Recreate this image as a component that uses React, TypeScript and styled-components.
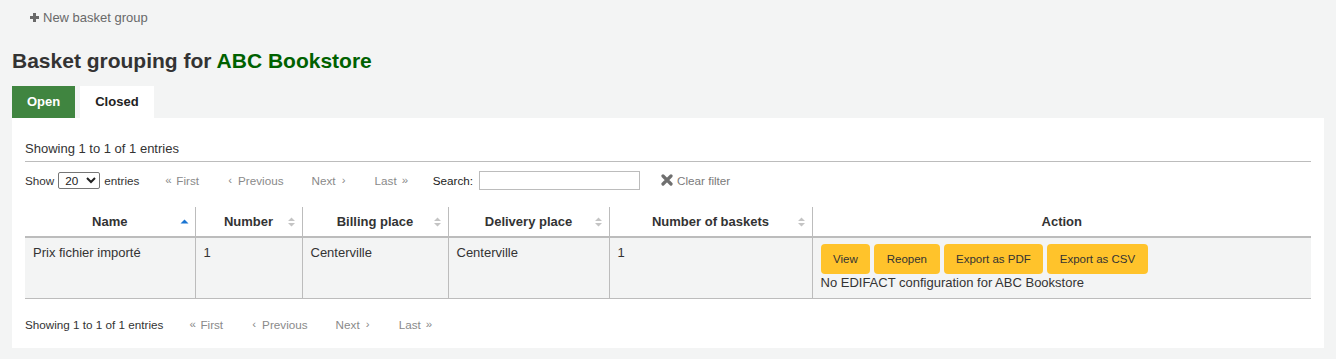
import React from "react";
import styled, { createGlobalStyle } from "styled-components";

const GlobalStyle = createGlobalStyle`
  body {
    margin: 0;
    background: #f3f4f4;
    font-family: "Liberation Sans", Arial, sans-serif;
    font-size: 13px;
    color: #333;
  }
`;

const Page = styled.div`
  padding: 0 12px;
`;

const Toolbar = styled.div`
  display: flex;
  align-items: center;
  height: 35px;
  padding-left: 17px;
`;

const ToolbarButton = styled.span`
  display: inline-flex;
  align-items: center;
  gap: 3px;
  color: #696969;
  font-size: 13px;
`;

const Title = styled.h1`
  margin: 14px 0 0;
  font-size: 21px;
  line-height: 24px;
  font-weight: bold;
  color: #333;
`;

const Vendor = styled.span`
  color: #006100;
`;

const Tabs = styled.div`
  display: flex;
  gap: 5px;
  margin-top: 13px;
`;

const Tab = styled.div<{ $active?: boolean }>`
  height: 32px;
  line-height: 32px;
  padding: 0 15px;
  font-weight: bold;
  font-size: 13px;
  background: ${({ $active }) => ($active ? "#408540" : "#fff")};
  color: ${({ $active }) => ($active ? "#fff" : "#222")};
`;

const Panel = styled.div`
  background: #fff;
  padding: 22px 13px 9px;
`;

const Info = styled.div<{ $small?: boolean }>`
  font-size: ${({ $small }) => ($small ? "11.7px" : "13px")};
  line-height: 17px;
  color: #333;
`;

const InfoBar = styled.div`
  padding-bottom: 4px;
  border-bottom: 1px solid #bcbcbc;
`;

const Controls = styled.div`
  display: flex;
  align-items: center;
  height: 36px;
  margin-bottom: 9px;
`;

const Length = styled.label`
  display: flex;
  align-items: center;
  gap: 4px;
  font-size: 11.7px;
  color: #333;
`;

const Select = styled.select`
  font-family: "Liberation Sans", Arial, sans-serif;
  font-size: 11.7px;
  height: 17px;
  width: 42px;
  padding: 0 2px;
  border: 1px solid #767676;
  border-radius: 2px;
  background: #fff;
  color: #222;
`;

const Pager = styled.div<{ $left: number }>`
  display: flex;
  align-items: center;
  gap: 28px;
  margin-left: ${({ $left }) => $left}px;
  font-size: 11.7px;
  color: #8a8a8a;
`;

const PageLink = styled.span`
  display: inline-flex;
  align-items: center;
  gap: 5px;
`;

const Arrow = styled.span`
  display: inline-block;
  width: 6px;
  text-align: center;
  font-size: 11.5px;
`;

const Search = styled.label`
  display: flex;
  align-items: center;
  gap: 6px;
  margin-left: 25px;
  font-size: 11.7px;
  color: #222;
`;

const SearchInput = styled.input`
  width: 161px;
  height: 19px;
  box-sizing: border-box;
  border: 1px solid #bcbcbc;
  padding: 0 4px;
`;

const ClearFilter = styled.span`
  display: inline-flex;
  align-items: center;
  gap: 4px;
  margin-left: 21px;
  font-size: 11.7px;
  color: #7a7a7a;
`;

const Table = styled.table`
  width: 100%;
  table-layout: fixed;
  border-collapse: collapse;
  font-size: 13px;
`;

const Col = styled.col<{ $width?: number }>`
  width: ${({ $width }) => ($width ? `${$width}px` : "auto")};
`;

const Th = styled.th`
  position: relative;
  height: 29px;
  padding: 0 18px;
  font-weight: bold;
  text-align: center;
  color: #333;
  border-left: 1px solid #bcbcbc;
  border-bottom: 2px solid #bcbcbc;
  &:first-child {
    border-left: none;
  }
`;

const SortIcon = styled.span`
  position: absolute;
  right: 6px;
  top: 50%;
  transform: translateY(-50%);
  display: flex;
`;

const Row = styled.tr`
  background: #f3f4f4;
`;

const Td = styled.td`
  vertical-align: top;
  padding: 6px 8px 7px;
  line-height: 17px;
  color: #333;
  border-left: 1px solid #bcbcbc;
  border-bottom: 1px solid #bcbcbc;
  &:first-child {
    border-left: none;
  }
`;

const Actions = styled.div`
  display: flex;
  gap: 4px;
`;

const ActionButton = styled.button`
  height: 30px;
  padding: 0 12.5px;
  font-family: "Liberation Sans", Arial, sans-serif;
  font-size: 11.5px;
  color: #333;
  background: #ffc32b;
  border: none;
  border-radius: 4px;
`;

const Footer = styled.div`
  display: flex;
  align-items: center;
  height: 30px;
  margin-top: 10px;
`;

const PlusIcon = () => (
  <svg width="11" height="11" viewBox="0 0 11 11">
    <path d="M5.5 1v9M1 5.5h9" stroke="#696969" strokeWidth="3" />
  </svg>
);

const XIcon = () => (
  <svg width="12" height="12" viewBox="0 0 12 12">
    <path
      d="M2 2l8 8M10 2l-8 8"
      stroke="#6f6f6f"
      strokeWidth="3.2"
      strokeLinecap="round"
    />
  </svg>
);

const Sort = ({ active }: { active?: boolean }) =>
  active ? (
    <svg width="9" height="12" viewBox="0 0 9 12">
      <path d="M0.5 7.5L4.5 3.5L8.5 7.5Z" fill="#1a75d2" />
    </svg>
  ) : (
    <svg width="9" height="12" viewBox="0 0 9 12">
      <path d="M1 5L4.5 1.5L8 5Z M1 7L4.5 10.5L8 7Z" fill="#c4c4c4" />
    </svg>
  );

const Pagination = ({ left }: { left: number }) => (
  <Pager $left={left}>
    <PageLink>
      <Arrow>«</Arrow>First
    </PageLink>
    <PageLink>
      <Arrow>‹</Arrow>Previous
    </PageLink>
    <PageLink>
      Next<Arrow>›</Arrow>
    </PageLink>
    <PageLink>
      Last<Arrow>»</Arrow>
    </PageLink>
  </Pager>
);

const columns = [
  { label: "Name", width: 170, sort: "active" },
  { label: "Number", width: 107, sort: "both" },
  { label: "Billing place", width: 146, sort: "both" },
  { label: "Delivery place", width: 161, sort: "both" },
  { label: "Number of baskets", width: 203, sort: "both" },
  { label: "Action", width: undefined, sort: "none" },
];

export default function App() {
  return (
    <>
      <GlobalStyle />
      <Page>
        <Toolbar>
          <ToolbarButton>
            <PlusIcon />
            New basket group
          </ToolbarButton>
        </Toolbar>
        <Title>
          Basket grouping for <Vendor>ABC Bookstore</Vendor>
        </Title>
        <Tabs>
          <Tab $active>Open</Tab>
          <Tab>Closed</Tab>
        </Tabs>
        <Panel>
          <InfoBar>
            <Info>Showing 1 to 1 of 1 entries</Info>
          </InfoBar>
          <Controls>
            <Length>
              Show
              <Select defaultValue="20">
                <option>10</option>
                <option>20</option>
                <option>50</option>
              </Select>
              entries
            </Length>
            <Pagination left={26} />
            <Search>
              Search:
              <SearchInput type="text" />
            </Search>
            <ClearFilter>
              <XIcon />
              Clear filter
            </ClearFilter>
          </Controls>
          <Table>
            <colgroup>
              {columns.map((c) => (
                <Col key={c.label} $width={c.width} />
              ))}
            </colgroup>
            <thead>
              <tr>
                {columns.map((c) => (
                  <Th key={c.label}>
                    {c.label}
                    {c.sort !== "none" && (
                      <SortIcon>
                        <Sort active={c.sort === "active"} />
                      </SortIcon>
                    )}
                  </Th>
                ))}
              </tr>
            </thead>
            <tbody>
              <Row>
                <Td>Prix fichier importé</Td>
                <Td>1</Td>
                <Td>Centerville</Td>
                <Td>Centerville</Td>
                <Td>1</Td>
                <Td>
                  <Actions>
                    <ActionButton>View</ActionButton>
                    <ActionButton>Reopen</ActionButton>
                    <ActionButton>Export as PDF</ActionButton>
                    <ActionButton>Export as CSV</ActionButton>
                  </Actions>
                  No EDIFACT configuration for ABC Bookstore
                </Td>
              </Row>
            </tbody>
          </Table>
          <Footer>
            <Info $small>Showing 1 to 1 of 1 entries</Info>
            <Pagination left={26} />
          </Footer>
        </Panel>
      </Page>
    </>
  );
}
